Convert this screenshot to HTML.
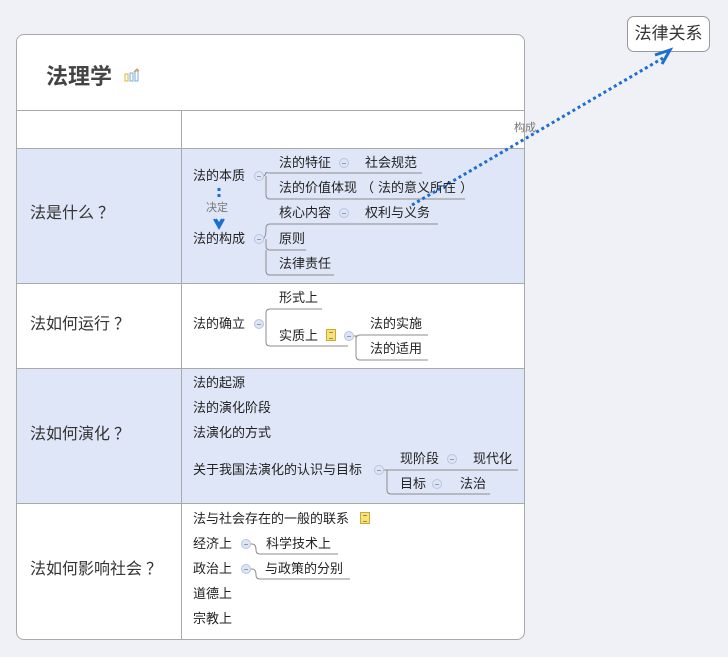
<!DOCTYPE html>
<html><head><meta charset="utf-8"><style>
body{margin:0;width:728px;height:657px;background:#eff1f6;position:relative;overflow:hidden;font-family:"Liberation Sans","Noto Sans CJK SC",sans-serif;color:#222}
.t{position:absolute;font-size:13px;line-height:16px;white-space:nowrap}
.r{position:absolute;font-size:16px;line-height:20px;left:30px;color:#333}
.p{margin-left:4px}
.q{margin:0 4px}
.m{position:absolute;width:10px;height:10px;border-radius:50%;background:#dde4f3;border:1px solid #b9c6de;box-sizing:border-box}
.m:after{content:"";position:absolute;left:2px;top:3.5px;width:4px;height:1px;background:#8a9bbd}
.n{position:absolute;width:10px;height:12px;background:#f6e27a;border:1px solid #c9a93a;box-sizing:border-box}
.n:after{content:"";position:absolute;left:2px;top:2px;width:4px;height:5px;border-top:1px solid #a88a20;border-bottom:1px solid #a88a20}
</style></head><body>
<div style="position:absolute;left:16px;top:34px;width:509px;height:606px;background:#fff;border:1px solid #a9a9a9;border-radius:8px;box-sizing:border-box;overflow:hidden">
<div style="position:absolute;left:0;top:113px;width:100%;height:135px;background:#dfe6f7"></div>
<div style="position:absolute;left:0;top:333px;width:100%;height:135px;background:#dfe6f7"></div>
<div style="position:absolute;left:0;top:75px;width:100%;height:1px;background:#a9a9a9"></div>
<div style="position:absolute;left:0;top:113px;width:100%;height:1px;background:#a9a9a9"></div>
<div style="position:absolute;left:0;top:248px;width:100%;height:1px;background:#a9a9a9"></div>
<div style="position:absolute;left:0;top:333px;width:100%;height:1px;background:#a9a9a9"></div>
<div style="position:absolute;left:0;top:468px;width:100%;height:1px;background:#a9a9a9"></div>
<div style="position:absolute;left:164px;top:75px;width:1px;height:540px;background:#a9a9a9"></div>
</div>
<div style="position:absolute;left:46px;top:63px;font-size:22px;font-weight:bold;color:#444;line-height:28px">法理学</div>
<svg style="position:absolute;left:124px;top:68px" width="16" height="14"><rect x="1" y="6" width="3" height="7" fill="none" stroke="#d9b83a"/><rect x="6" y="5" width="3" height="8" fill="none" stroke="#7aa8d8"/><rect x="11" y="3" width="3" height="10" fill="none" stroke="#7aa8d8"/><path d="M10 4 L13 1 L15 3" fill="none" stroke="#e08a3a"/></svg>
<div style="position:absolute;left:627px;top:16px;width:83px;height:36px;border:1px solid #999;border-radius:7px;background:#fff;box-sizing:border-box;font-size:17px;line-height:34px;text-align:center;color:#333">法律关系</div>
<svg style="position:absolute;left:0;top:0" width="728" height="657">
<g fill="none" stroke="#8c8c8c" stroke-width="1">
<path d="M258 176 H262 Q266 176 266 172 Q266 173 270 173 H422"/>
<path d="M266 176 V195 Q266 199 270 199 H465"/>
<path d="M258 239 H262 Q266 239 266 228 Q266 224 270 224 H438"/>
<path d="M266 239 V246 Q266 250 270 250 H306"/>
<path d="M266 250 V271 Q266 275 270 275 H334"/>
<path d="M258 324 H262 M266 324 V313 Q266 309 270 309 H322"/>
<path d="M266 324 V342 Q266 346 270 346 H348"/>
<path d="M352 336 H356 V339 Q356 335 360 335 H428"/>
<path d="M356 339 V356 Q356 360 360 360 H428"/>
<path d="M383 470 H387 M387 470 H518"/>
<path d="M387 470 V490 Q387 494 391 494 H490"/>
<path d="M249 544 H252 Q256 544 256 550 Q256 554 260 554 H338"/>
<path d="M249 569 H252 Q256 569 256 575 Q256 579 260 579 H350"/>
</g>
<path d="M219 188 V200" stroke="#1a6fd0" stroke-width="3" stroke-dasharray="3 3"/>
<path d="M214 219 L219 228 L224 219 M216 219 L219 224 L222 219" stroke="#1a6fd0" stroke-width="2" fill="none"/>
<path d="M412 205 L663 58" stroke="#1a6fd0" stroke-width="3" stroke-dasharray="3 3"/>
<path d="M655 55 L670 50 L662 64" stroke="#1a6fd0" stroke-width="3" fill="none"/>
</svg>
<div class="t" style="left:514px;top:120px;font-size:11px;color:#777">构成</div>
<div class="t" style="left:206px;top:200px;font-size:11px;color:#777">决定</div>
<div class="r" style="top:204px">法是什么<span class="p">？</span></div>
<div class="r" style="top:315px">法如何运行<span class="p">？</span></div>
<div class="r" style="top:425px">法如何演化<span class="p">？</span></div>
<div class="r" style="top:560px">法如何影响社会<span class="p">？</span></div>
<div class="t" style="left:193px;top:168px">法的本质</div><div class="m" style="left:254px;top:171px"></div>
<div class="t" style="left:279px;top:155px">法的特征</div><div class="m" style="left:339px;top:158px"></div>
<div class="t" style="left:365px;top:155px">社会规范</div>
<div class="t" style="left:279px;top:180px">法的价值体现<span class="q">（</span>法的意义所在<span class="q">）</span></div>
<div class="t" style="left:279px;top:205px">核心内容</div><div class="m" style="left:339px;top:208px"></div>
<div class="t" style="left:365px;top:205px">权利与义务</div>
<div class="t" style="left:193px;top:231px">法的构成</div><div class="m" style="left:254px;top:234px"></div>
<div class="t" style="left:279px;top:231px">原则</div>
<div class="t" style="left:279px;top:256px">法律责任</div>
<div class="t" style="left:279px;top:290px">形式上</div>
<div class="t" style="left:193px;top:316px">法的确立</div><div class="m" style="left:254px;top:319px"></div>
<div class="t" style="left:279px;top:328px">实质上</div><div class="n" style="left:326px;top:329px"></div><div class="m" style="left:344px;top:331px"></div>
<div class="t" style="left:370px;top:316px">法的实施</div>
<div class="t" style="left:370px;top:341px">法的适用</div>
<div class="t" style="left:193px;top:375px">法的起源</div>
<div class="t" style="left:193px;top:400px">法的演化阶段</div>
<div class="t" style="left:193px;top:425px">法演化的方式</div>
<div class="t" style="left:193px;top:462px">关于我国法演化的认识与目标</div><div class="m" style="left:374px;top:465px"></div>
<div class="t" style="left:400px;top:451px">现阶段</div><div class="m" style="left:447px;top:454px"></div>
<div class="t" style="left:473px;top:451px">现代化</div>
<div class="t" style="left:400px;top:476px">目标</div><div class="m" style="left:432px;top:479px"></div>
<div class="t" style="left:460px;top:476px">法治</div>
<div class="t" style="left:193px;top:511px">法与社会存在的一般的联系</div><div class="n" style="left:360px;top:512px"></div>
<div class="t" style="left:193px;top:536px">经济上</div><div class="m" style="left:241px;top:539px"></div>
<div class="t" style="left:266px;top:536px">科学技术上</div>
<div class="t" style="left:193px;top:561px">政治上</div><div class="m" style="left:241px;top:564px"></div>
<div class="t" style="left:265px;top:561px">与政策的分别</div>
<div class="t" style="left:193px;top:586px">道德上</div>
<div class="t" style="left:193px;top:611px">宗教上</div>
</body></html>
